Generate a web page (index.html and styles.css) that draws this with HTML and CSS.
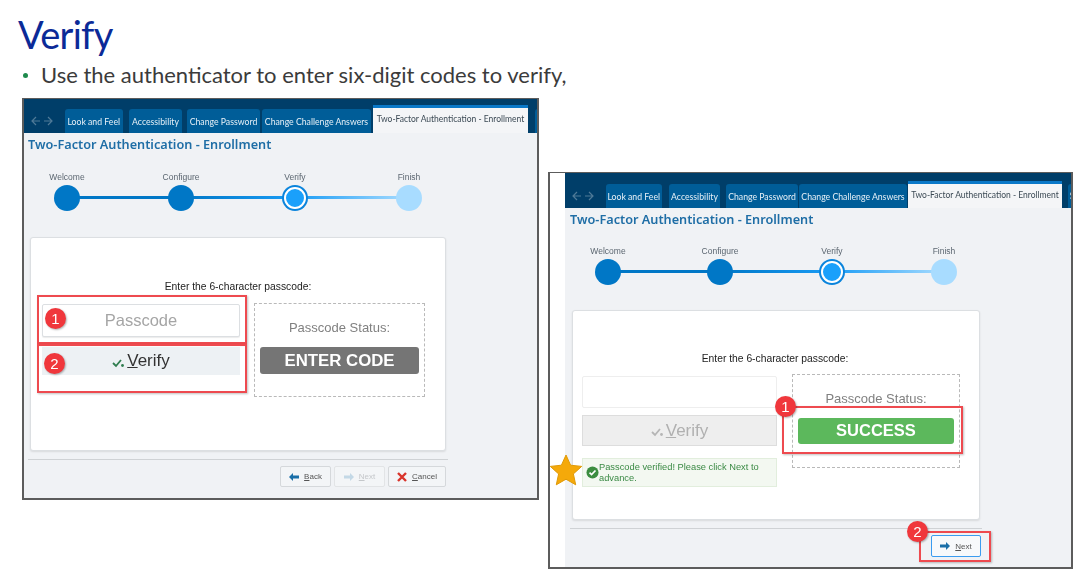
FILE: index.html
```html
<!DOCTYPE html>
<html lang="en">
<head>
  <meta charset="UTF-8">
  <title>Verify</title>
  <link rel="stylesheet" href="styles.css">
</head>
<body>

  <h1 class="slide-title">Verify</h1>
  <ul class="slide-points">
    <li>Use the authenticator to enter six-digit codes to verify,</li>
  </ul>

  <div class="windows">

    <!-- before the code is entered -->
    <div class="window window-before">
      <div class="tab-bar">
        <div class="nav-arrows">
          <svg width="26" height="10" viewBox="0 0 26 10"><path d="M7 1 3 5l4 4M3 5h8M19 1l4 4-4 4M23 5h-8" fill="none" stroke="#4f7a98" stroke-width="1.2"/></svg>
        </div>
        <div class="tab tab-look">Look and Feel</div>
        <div class="tab tab-access">Accessibility</div>
        <div class="tab tab-password">Change Password</div>
        <div class="tab tab-challenge">Change Challenge Answers</div>
        <div class="tab tab-active">Two-Factor Authentication - Enrollment</div>
        <div class="tab tab-more"></div>
      </div>
      <h2 class="page-title">Two-Factor Authentication - Enrollment</h2>
      <div class="steps">
        <div class="step step-done"><span class="step-label">Welcome</span><span class="step-dot"></span></div>
        <div class="step step-done step-to-current"><span class="step-label">Configure</span><span class="step-dot"></span></div>
        <div class="step step-current"><span class="step-label">Verify</span><span class="step-dot"></span></div>
        <div class="step step-todo"><span class="step-label">Finish</span><span class="step-dot"></span></div>
      </div>
      <div class="card">
        <p class="card-prompt">Enter the 6-character passcode:</p>
        <div class="card-grid">
          <div class="code-col">
            <div class="code-input">Passcode</div>
            <div class="verify-btn">
              <svg width="13" height="10" viewBox="0 0 13 10"><path d="M1 5 4 8l5-6" fill="none" stroke="#2f7d4f" stroke-width="1.800"/><circle cx="10.500" cy="7.500" r="1.400" fill="#2f7d4f"/></svg>
              <span><u>V</u>erify</span>
            </div>
          </div>
          <div class="status-box">
            <div class="status-label">Passcode Status:</div>
            <div class="status-badge">ENTER CODE</div>
          </div>
        </div>
      </div>
      <div class="footer">
        <div class="footer-btn btn-back">
          <svg width="10" height="8" viewBox="0 0 10 8"><path d="M4 0 0 4l4 4V5.500h6v-3H4z" fill="#1a6fa8"/></svg>
          <span><u>B</u>ack</span>
        </div>
        <div class="footer-btn btn-next btn-disabled">
          <svg width="10" height="8" viewBox="0 0 10 8"><path d="M6 0l4 4-4 4V5.500H0v-3h6z" fill="#c3d8e6"/></svg>
          <span><u>N</u>ext</span>
        </div>
        <div class="footer-btn btn-cancel">
          <svg width="10" height="10" viewBox="0 0 10 10"><path d="M1 1l8 8M9 1 1 9" stroke="#d9342b" stroke-width="2.400"/></svg>
          <span><u>C</u>ancel</span>
        </div>
      </div>

      <div class="red-box red-input"></div>
      <div class="red-box red-verify"></div>
      <div class="callout callout-input">1</div>
      <div class="callout callout-verify">2</div>
    </div>

    <!-- after the code is accepted -->
    <div class="window window-after">
      <div class="tab-bar">
        <div class="nav-arrows">
          <svg width="26" height="10" viewBox="0 0 26 10"><path d="M7 1 3 5l4 4M3 5h8M19 1l4 4-4 4M23 5h-8" fill="none" stroke="#4f7a98" stroke-width="1.2"/></svg>
        </div>
        <div class="tab tab-look">Look and Feel</div>
        <div class="tab tab-access">Accessibility</div>
        <div class="tab tab-password">Change Password</div>
        <div class="tab tab-challenge">Change Challenge Answers</div>
        <div class="tab tab-active">Two-Factor Authentication - Enrollment</div>
        <div class="tab tab-more">S</div>
      </div>
      <h2 class="page-title">Two-Factor Authentication - Enrollment</h2>
      <div class="steps">
        <div class="step step-done"><span class="step-label">Welcome</span><span class="step-dot"></span></div>
        <div class="step step-done step-to-current"><span class="step-label">Configure</span><span class="step-dot"></span></div>
        <div class="step step-current"><span class="step-label">Verify</span><span class="step-dot"></span></div>
        <div class="step step-todo"><span class="step-label">Finish</span><span class="step-dot"></span></div>
      </div>
      <div class="card">
        <p class="card-prompt">Enter the 6-character passcode:</p>
        <div class="card-grid">
          <div class="code-col">
            <div class="code-input"></div>
            <div class="verify-btn verify-disabled">
              <svg width="13" height="10" viewBox="0 0 13 10"><path d="M1 5 4 8l5-6" fill="none" stroke="#b5b5b5" stroke-width="1.800"/><circle cx="10.500" cy="7.500" r="1.400" fill="#b5b5b5"/></svg>
              <span><u>V</u>erify</span>
            </div>
            <div class="verified-msg">
              <svg width="13" height="13" viewBox="0 0 14 14"><circle cx="7" cy="7" r="6.500" fill="#3c8d40"/><path d="M3.800 7.200 6 9.300l4.200-4.500" fill="none" stroke="#fff" stroke-width="1.800"/></svg>
              <span>Passcode verified! Please click Next to advance.</span>
            </div>
          </div>
          <div class="status-box">
            <div class="status-label">Passcode Status:</div>
            <div class="status-badge badge-success">SUCCESS</div>
          </div>
        </div>
      </div>
      <div class="footer">
        <div class="footer-btn btn-next btn-focus">
          <svg width="10" height="8" viewBox="0 0 10 8"><path d="M6 0l4 4-4 4V5.500H0v-3h6z" fill="#1a6fa8"/></svg>
          <span><u>N</u>ext</span>
        </div>
      </div>

      <div class="red-box red-status"></div>
      <div class="red-box red-next"></div>
      <div class="callout callout-status">1</div>
      <div class="callout callout-next">2</div>
      <svg class="star" width="36" height="36" viewBox="0 0 36 36"><path d="M18 3l4.600 10.200 11.100 1.200-8.300 7.500 2.300 10.900L18 27.200 8.300 32.800l2.300-10.900-8.300-7.500 11.100-1.200z" fill="#f5a90a" stroke="#e09a08" stroke-width="1" stroke-linejoin="round"/></svg>
    </div>

  </div>

</body>
</html>
```

FILE: styles.css
```css
* {
  box-sizing: border-box;
}
body {
  margin: 0;
  background-color: #fff;
  font-family: 'Liberation Sans', Arial, sans-serif;
}
.slide-title {
  margin: 0;
  padding: 10px 0 0 18px;
  height: 58px;
  font-family: 'Lato', sans-serif;
  font-size: 38px;
  letter-spacing: -0.7px;
  line-height: 48px;
  font-weight: 400;
  color: #0b2a97;
}
.slide-points {
  margin: 0;
  padding: 2px 0 0 41px;
  height: 40px;
  list-style: none;
}
.slide-points li {
  position: relative;
  font-family: 'Lato', sans-serif;
  font-size: 22px;
  line-height: 30px;
  color: #3b3b3b;
}
.slide-points li::before {
  content: '';
  position: absolute;
  left: -18px;
  top: 13px;
  width: 5px;
  height: 5px;
  border-radius: 50%;
  background-color: #1e8a4c;
}
.windows {
  display: flex;
  align-items: flex-start;
  gap: 9px;
  padding-left: 22px;
}

/* window */
.window {
  position: relative;
  flex: none;
  border: 2px solid #5c5c5c;
  border-top-width: 1px;
  background-color: #f0f2f5;
  filter: blur(0.35px);
}
.window-before {
  width: 517px;
  height: 402px;
  --step-gap: 88px;
}
.window-after {
  width: 525px;
  height: 397px;
  margin-top: 74px;
  --step-gap: 86px;
  background: linear-gradient(to right, #fff 15px, #f0f2f5 15px);
  padding-left: 15px;
}
.tab-bar {
  display: flex;
  align-items: flex-end;
  height: 34px;
  overflow: hidden;
  background-color: #003e69;
  padding-left: 5px;
}
.window-after .tab-bar {
  height: 35px;
}
.nav-arrows {
  flex: none;
  width: 35.500px;
  height: 24px;
  display: flex;
  align-items: center;
}
.tab {
  height: 24px;
  flex: none;
  border-radius: 3px 3px 0 0;
  background-color: #005d98;
  color: #e6f0f7;
  font-family: 'Lato', sans-serif;
  font-size: 8.700px;
  line-height: 26px;
  text-align: center;
  white-space: nowrap;
  overflow: hidden;
}
.tab-look {
  width: 58.500px;
  margin-right: 6px;
}
.tab-access {
  width: 53px;
  margin-right: 5px;
}
.tab-password {
  width: 73px;
  margin-right: 2px;
}
.tab-challenge {
  width: 109px;
  margin-right: 2px;
}
.tab-active {
  width: 155px;
  height: 28px;
  margin-right: 7px;
  border-top: 3px solid #0a78c8;
  border-radius: 0;
  background-color: #f4f5f7;
  color: #3c4a55;
  line-height: 23px;
  font-size: 8.500px;
}
.tab-more {
  width: 8px;
  line-height: 24px;
}
.window-after .tab-look {
  width: 56.500px;
  margin-right: 7px;
}
.window-after .tab-access {
  width: 51px;
  margin-right: 6px;
}
.window-after .tab-password {
  width: 72px;
  margin-right: 1px;
}
.window-after .tab-challenge {
  width: 108px;
  margin-right: 1px;
}
.window-after .tab-active {
  width: 154px;
  height: 27px;
  margin-right: 6px;
}
.page-title {
  margin: 1px 0 0 4px;
  height: 20px;
  font-family: 'Noto Sans', sans-serif;
  font-size: 12.700px;
  line-height: 20px;
  font-weight: 600;
  color: #1f6ea6;
}
.window-after .page-title {
  margin-left: 5px;
}

/* progress steps */
.steps {
  display: flex;
  gap: var(--step-gap);
  margin: 17px 0 0 30px;
}
.window-after .steps {
  margin-top: 16px;
}
.step {
  position: relative;
  width: 26px;
  display: flex;
  flex-direction: column;
  align-items: center;
  gap: 2px;
}
.step-label {
  font-size: 8.500px;
  line-height: 12px;
  color: #5b6670;
  white-space: nowrap;
}
.step-dot {
  position: relative;
  width: 26px;
  height: 26px;
  border-radius: 50%;
  background-color: #0077c6;
  z-index: 1;
}
.step:not(:last-child)::after {
  content: '';
  position: absolute;
  left: 13px;
  top: 25px;
  width: calc(26px + var(--step-gap));
  height: 3px;
  background-color: #0077c6;
}
.step-to-current::after {
  background: linear-gradient(to right, #0077c6, #1a9cf5) !important;
}
.step-current::after {
  background: linear-gradient(to right, #1a9cf5, #a8dcff) !important;
}
.step-current .step-dot {
  background-color: #1aa0fb;
  border: 2px solid #fff;
  box-shadow: 0 0 0 2px #0a84dc;
  width: 22px;
  height: 22px;
  margin: 2px;
}
.step-todo .step-dot {
  background-color: #a8dcff;
}

/* card */
.card {
  width: 416px;
  height: 214px;
  margin: 26px 0 0 6px;
  padding: 42px 11px 0;
  background-color: #fff;
  border: 1px solid #dcdfe2;
  border-radius: 3px;
  box-shadow: 0 1px 2px rgba(0,0,0,0.1);
}
.window-after .card {
  width: 408px;
  height: 210px;
  margin: 25px 0 0 7px;
  padding-top: 41px;
  padding-left: 9px;
}
.card-prompt {
  margin: 0;
  height: 14px;
  font-size: 10.300px;
  line-height: 14px;
  text-align: center;
  color: #222;
}
.card-grid {
  display: grid;
  grid-template-columns: 198px 171px;
  gap: 14px;
  margin-top: 9px;
}
.window-after .card-grid {
  grid-template-columns: 195px 168px;
  gap: 15px;
  margin-top: 8px;
}
.code-col {
  display: flex;
  flex-direction: column;
  gap: 10px;
  padding-top: 1px;
}
.window-after .code-col {
  gap: 7px;
  padding-top: 2px;
}
.code-input {
  height: 33px;
  background-color: #fff;
  border: 1px solid #dcdfe2;
  border-radius: 2px;
  box-shadow: 0 1px 1px rgba(0,0,0,0.08);
  text-align: center;
  font-size: 16.500px;
  line-height: 31px;
  color: #a5a5a5;
}
.window-after .code-input {
  height: 32px;
  box-shadow: none;
  border-color: #eee;
}
.verify-btn {
  height: 28px;
  display: flex;
  justify-content: center;
  align-items: center;
  gap: 2px;
  background-color: #edf1f4;
  font-size: 17px;
  color: #333;
}
.verify-btn svg {
  margin-top: 3px;
}
.verify-disabled {
  height: 31px;
  background-color: #eee;
  border: 1px solid #ddd;
  color: #b0b0b0;
}
.verified-msg {
  display: flex;
  align-items: center;
  gap: 0;
  height: 29px;
  margin-top: 5px;
  padding: 0 3px;
  background-color: #f3f8f1;
  border: 1px solid #e2eedd;
  font-size: 9.300px;
  line-height: 11px;
  color: #3b8a45;
}
.verified-msg svg {
  flex: none;
}
.status-box {
  height: 94px;
  padding: 16px 5px 0;
  border: 1px dashed #b9b9b9;
  text-align: center;
}
.status-label {
  height: 27px;
  font-size: 13px;
  line-height: 15px;
  color: #808080;
}
.status-badge {
  height: 27px;
  border-radius: 3px;
  background-color: #757575;
  color: #fff;
  font-size: 16.800px;
  font-weight: 700;
  line-height: 27px;
}
.badge-success {
  height: 26px;
  background-color: #5cb85c;
  font-size: 16.500px;
  line-height: 25px;
}

/* footer buttons */
.footer {
  display: flex;
  justify-content: flex-end;
  gap: 3px;
  width: 420px;
  margin: 8px 0 0 4px;
  padding: 6px 2px 0 0;
  border-top: 1px solid #cfd2d5;
}
.window-after .footer {
  width: 412px;
  margin-left: 5px;
  padding-right: 0;
}
.footer-btn {
  height: 21px;
  display: flex;
  align-items: center;
  justify-content: center;
  gap: 5px;
  background-color: #f3f5f7;
  border: 1px solid #d5d8db;
  border-radius: 2px;
  font-size: 8px;
  color: #555;
}
.btn-back,
.btn-next {
  width: 51px;
}
.btn-cancel {
  width: 58px;
}
.btn-disabled {
  color: #c4c7ca;
  border-color: #e2e4e6;
}
.btn-focus {
  width: 50px;
  height: 22px;
  margin-right: 1px;
  border-color: #3a9cf0;
  background-color: #f7f9fb;
}

/* annotations over the screenshots */
.red-box {
  position: absolute;
  border: 2px solid #ee4a4f;
  box-shadow: 1px 1px 2px rgba(0,0,0,0.25);
}
.red-input {
  left: 13px;
  top: 196px;
  width: 210px;
  height: 49px;
}
.red-verify {
  left: 13px;
  top: 245px;
  width: 210px;
  height: 49px;
}
.red-status {
  left: 232px;
  top: 233px;
  width: 181px;
  height: 48px;
}
.red-next {
  left: 369px;
  top: 358px;
  width: 72px;
  height: 31px;
}
.callout {
  position: absolute;
  width: 21px;
  height: 21px;
  border-radius: 50%;
  background-color: #f0373c;
  box-shadow: 1px 1px 2px rgba(0,0,0,0.3);
  color: #fff;
  font-size: 15px;
  line-height: 21px;
  text-align: center;
}
.callout-input {
  left: 21px;
  top: 209px;
}
.callout-verify {
  left: 20px;
  top: 254px;
}
.callout-status {
  left: 225px;
  top: 223px;
}
.callout-next {
  left: 357px;
  top: 348px;
}
.star {
  position: absolute;
  left: -2px;
  top: 279px;
}
```
